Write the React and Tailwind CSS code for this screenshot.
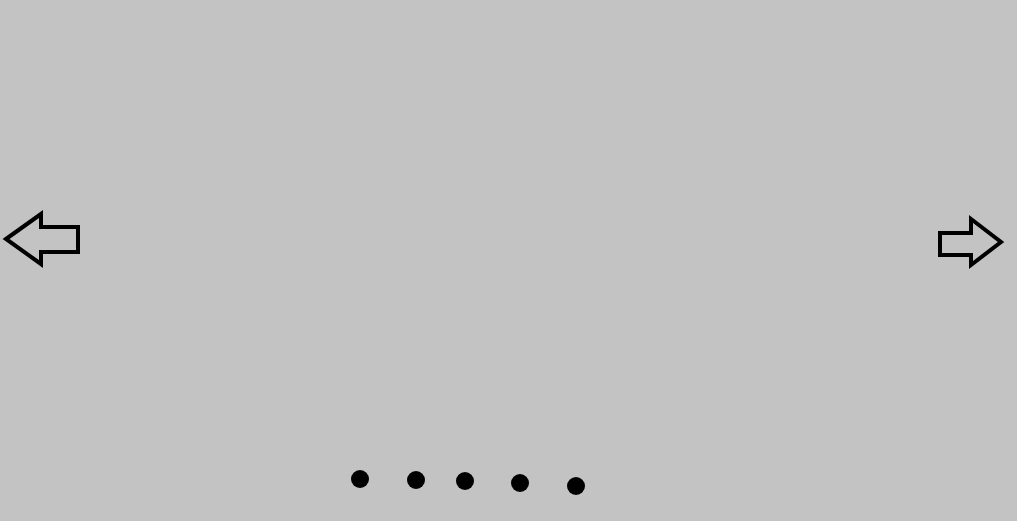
import React from "react";

const dots = [
  { ml: "ml-0", mt: "mt-0" },
  { ml: "ml-[38px]", mt: "mt-[1px]" },
  { ml: "ml-[31px]", mt: "mt-[2px]" },
  { ml: "ml-[37px]", mt: "mt-[4px]" },
  { ml: "ml-[38px]", mt: "mt-[7px]" },
];

export default function App() {
  return (
    <div className="relative w-full h-[521px] bg-[#c3c3c3] overflow-hidden">
      {/* Prev */}
      <button className="absolute left-0 top-[208px]" aria-label="Previous">
        <svg width="86" height="64" viewBox="0 0 86 64">
          <polygon
            points="6,31 41,6 41,19 78,19 78,44 41,44 41,56"
            fill="none"
            stroke="#000"
            strokeWidth="4"
            strokeLinejoin="miter"
          />
        </svg>
      </button>

      {/* Next */}
      <button className="absolute left-[930px] top-[210px]" aria-label="Next">
        <svg width="87" height="64" viewBox="0 0 87 64">
          <polygon
            points="10,23 41,23 41,9 71,32 41,55 41,45 10,45"
            fill="none"
            stroke="#000"
            strokeWidth="4"
            strokeLinejoin="miter"
          />
        </svg>
      </button>

      {/* Indicators */}
      <div className="absolute left-[351px] top-[470px] flex items-start">
        {dots.map((d, i) => (
          <div key={i} className={`w-[18px] h-[18px] rounded-full bg-black ${d.ml} ${d.mt}`} />
        ))}
      </div>
    </div>
  );
}
